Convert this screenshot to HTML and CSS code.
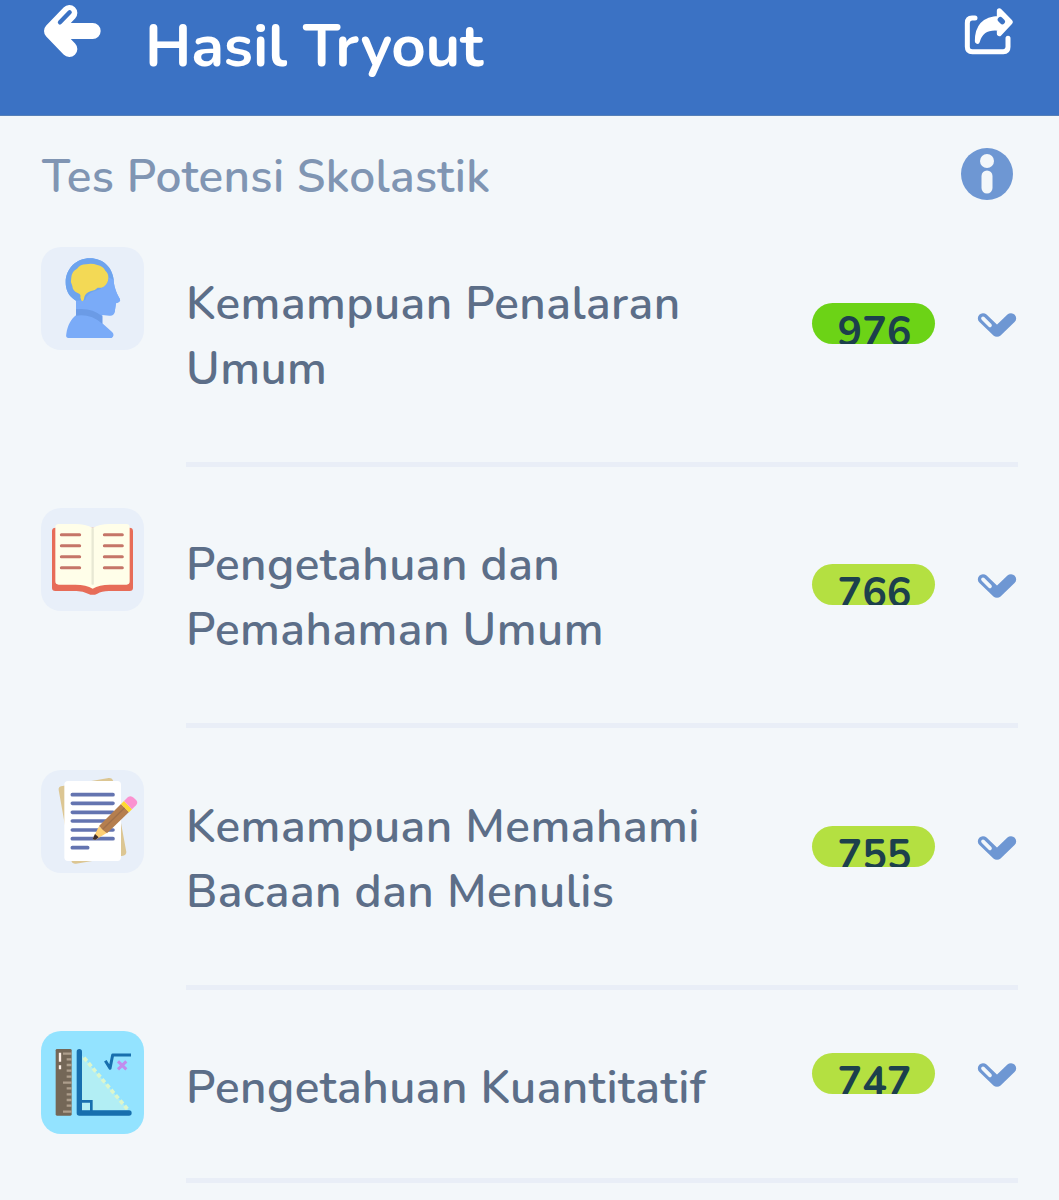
FILE: index.html
```html
<!DOCTYPE html>
<html lang="id">
<head>
    <meta charset="UTF-8">
    <meta name="viewport" content="width=device-width, initial-scale=1.0">
    <title>Hasil Tryout</title>
    <link rel="stylesheet" href="styles.css">
</head>
<body>
    <!-- shared chevron -->
    <svg class="defs" width="0" height="0">
        <symbol id="chevron" viewBox="528 62 126 84">
            <path d="M549 84 L591 124 L633 84" fill="none" stroke="#6e97d3" stroke-width="31" stroke-linecap="round" stroke-linejoin="round"/>
            <path d="M549 84 L570 105" stroke="#f3f7fa" stroke-width="11" stroke-linecap="round"/>
        </symbol>
    </svg>

    <header>
        <svg class="back" viewBox="126 9 180 168">
            <path d="M208 39 L156 93 L208 147 M160 93 H278" fill="none" stroke="#fff" stroke-width="48" stroke-linecap="round" stroke-linejoin="round"/>
            <path d="M209 37 L180 67" stroke="#3b72c4" stroke-width="13" stroke-linecap="round"/>
        </svg>
        <h1>Hasil Tryout</h1>
        <svg class="share" viewBox="66 18 156 150">
            <path d="M105 54 H96 Q82 54 82 69 V140 Q82 155 97 155 H190 Q204 155 204 141 V115" fill="none" stroke="#fff" stroke-width="15" stroke-linecap="round"/>
            <path d="M112 124 Q112 58 178 55 V32 L211 66 L178 101 V85 Q124 78 112 124 Z" fill="#fff" stroke="#fff" stroke-width="15" stroke-linejoin="round"/>
            <path d="M181 59 L187 65" stroke="#3b72c4" stroke-width="16" stroke-linecap="round"/>
        </svg>
    </header>

    <main>
        <div class="section">
            <h2>Tes Potensi Skolastik</h2>
            <svg class="info" viewBox="0 0 52 52">
                <circle cx="26" cy="26" r="26" fill="#6e97d3"/>
                <circle cx="26" cy="13" r="7" fill="#f3f7fa"/>
                <rect x="20.5" y="22.5" width="11" height="23" rx="5.5" fill="#f3f7fa"/>
            </svg>
        </div>

        <div class="row">
            <svg class="icon" viewBox="33 36 309 309">
                <path d="M138 197 C114 184 107 162 107 142 C107 101 139 70 180 70 C220 70 247 98 251 134 C252 154 257 169 270 193 Q273 201 258 205 L254 232 Q251 244 238 242 L217 240 V265 L247 292 Q255 302 245 309 H116 Q106 309 109 296 C113 270 123 253 138 241 Z" fill="#7aabf8"/>
                <path d="M138 197 C114 184 107 162 107 142 C107 101 139 70 180 70 C220 70 247 98 251 134 L238 140 L160 205 Z" fill="#6ea4ee"/>
                <path d="M138 197 L165 196 Q170 175 195 168 Q238 155 235 127 L251 134 C252 154 257 169 270 193 Q273 201 258 205 L254 232 L217 240 L138 225 Z" fill="#7aabf8"/>
                <path d="M138 223 Q184 217 217 244 V266 Q181 235 138 242 Z" fill="#6b9be6"/>
                <path d="M151 187 Q154 178 143 174 Q127 167 127 153 Q120 140 124 127 Q126 108 141 101 Q151 88 168 88 Q185 83 202 90 Q219 93 226 107 Q236 115 235 129 Q234 147 221 155 Q211 160 203 158 Q194 168 181 169 Q167 174 163 186 Q162 198 156 199 Q153 196 151 187 Z" fill="#f3d955"/>
            </svg>
            <div class="body">
                <p class="name">Kemampuan Penalaran<br>Umum</p>
                <div class="score high">976</div>
                <svg class="chevron"><use href="#chevron"/></svg>
            </div>
        </div>

        <div class="row">
            <svg class="icon" viewBox="33 39 309 309">
                <path d="M66 108 Q66 98 77 98 H298 Q309 98 309 108 V279 Q309 288 299 288 H242 Q216 287 202 296 Q188 303 174 296 Q158 287 135 288 H76 Q66 288 66 279 Z" fill="#e76c58"/>
                <path d="M76 95 Q77 87 86 87 H135 Q168 87 188 99 Q208 87 238 87 H289 Q299 87 299 96 V259 Q299 269 290 269 H239 Q208 269 188 281 Q169 269 136 269 H86 Q76 269 76 259 Z" fill="#fffee9"/>
                <path d="M188 102 V266" stroke="#e8e8d4" stroke-width="7" stroke-linecap="round"/>
                <path d="M94 119 H149 M94 152 H149 M94 185 H149 M94 218 H149 M223 119 H277 M223 152 H277 M223 185 H277 M223 218 H277" stroke="#c57568" stroke-width="9" stroke-linecap="round"/>
            </svg>
            <div class="body">
                <p class="name">Pengetahuan dan<br>Pemahaman Umum</p>
                <div class="score">766</div>
                <svg class="chevron"><use href="#chevron"/></svg>
            </div>
        </div>

        <div class="row">
            <svg class="icon" viewBox="33 45 309 309">
                <path d="M93 94 L236 69 Q247 68 250 79 L289 291 Q289 300 279 302 L138 326 Q127 328 124 318 L86 105 Q85 96 93 94 Z" fill="#dcc693"/>
                <rect x="103" y="78" width="170" height="240" rx="11" fill="#fff"/>
                <path d="M127 119 H249 M127 145 H249 M127 172 H249 M127 198 H249 M127 225 H249 M127 251 H249 M127 278 H173" stroke="#6474b0" stroke-width="11" stroke-linecap="round"/>
                <path d="M207 214 L189 250 Q190 256 197 254 L231 233 Z" fill="#ffcf73"/>
                <path d="M195 237 L189 250 Q190 256 197 254 L206 247 Z" fill="#3c2d2e"/>
                <path d="M207 213 L273 147 L297 171 L231 235 L220 226 Z" fill="#b57e4e"/>
                <path d="M218 223 L284 158" stroke="#a0704a" stroke-width="4"/>
                <path d="M273 147 L282 138 L306 163 L297 172 Z" fill="#ffd92f"/>
                <path d="M282 138 L294 126 Q303 120 311 128 L319 136 Q325 143 318 151 L306 163 Z" fill="#fb92d0"/>
            </svg>
            <div class="body">
                <p class="name">Kemampuan Memahami<br>Bacaan dan Menulis</p>
                <div class="score">755</div>
                <svg class="chevron"><use href="#chevron"/></svg>
            </div>
        </div>

        <div class="row single">
            <svg class="icon math" viewBox="33 46 309 309">
                <rect x="77" y="100" width="48" height="200" rx="4" fill="#746757"/>
                <path d="M99 114 H125 M110 131 H125 M110 148 H125 M110 165 H125 M110 183 H125 M99 201 H125 M110 218 H125 M110 236 H125 M110 253 H125 M110 270 H125 M99 288 H125" stroke="#ad9e8c" stroke-width="7"/>
                <path d="M90 111 V138 M90 149 V161" stroke="#fff1e8" stroke-width="7"/>
                <path d="M155 119 L296 284 H155 Z" fill="#b2eef4"/>
                <path d="M162 126 L292 280" stroke="#dcf6cc" stroke-width="11" stroke-dasharray="13 8"/>
                <path d="M155 257 H184 V287" fill="none" stroke="#176fae" stroke-width="8"/>
                <path d="M148 108 V292 H297" fill="none" stroke="#176fae" stroke-width="16" stroke-linecap="round" stroke-linejoin="round"/>
                <path d="M226 135 L240 158 L248 118 H303" fill="none" stroke="#176fae" stroke-width="9" stroke-linejoin="round"/>
                <path d="M264 137 L289 161 M289 137 L264 161" stroke="#c18ded" stroke-width="9"/>
            </svg>
            <div class="body">
                <p class="name">Pengetahuan Kuantitatif</p>
                <div class="score">747</div>
                <svg class="chevron"><use href="#chevron"/></svg>
            </div>
        </div>
    </main>
</body>
</html>
```
FILE: styles.css
```css
* {
    box-sizing: border-box;
}

body {
    font-family: "Nunito", "Lato", sans-serif;
    background-color: #f3f7fa;
    margin: 0;
    padding: 0;
    height: 1200px;
    overflow: hidden;
}

.defs {
    display: none;
}

header {
    display: flex;
    align-items: flex-start;
    height: 116px;
    padding: 3px 45px 0 42px;
    background-color: #3b72c4;
    border-bottom: 1px solid #5680b8;
}

.back {
    width: 60px;
    height: 56px;
}

h1 {
    flex: 1;
    margin: 8px 0 0 43px;
    font-size: 60px;
    line-height: 70px;
    font-weight: 700;
    letter-spacing: -0.2px;
    color: white;
}

.share {
    width: 52px;
    height: 50px;
    margin-top: 3px;
}

main {
    padding: 0 41px;
}

.section {
    display: flex;
    justify-content: space-between;
    height: 131px;
    padding: 32px 5px 0 0;
}

h2 {
    margin: 1px 0 0 1px;
    font-size: 46px;
    line-height: 56px;
    font-weight: 600;
    letter-spacing: 0.3px;
    color: #8095b3;
}

.info {
    width: 52px;
    height: 52px;
}

.row {
    display: flex;
    height: 220px;
    margin-bottom: 41.3px;
}

.icon {
    width: 103px;
    height: 103px;
    border-radius: 20px;
    background-color: #e8eff9;
}

.icon.math {
    background-color: #93e3ff;
}

.body {
    display: flex;
    flex: 1;
    margin-left: 42px;
    border-bottom: 5px solid #e9eef7;
}

.name {
    flex: 1;
    margin: 24px 0 0;
    font-size: 46px;
    line-height: 65px;
    font-weight: 600;
    letter-spacing: 0.45px;
    white-space: nowrap;
    color: #5c6e88;
}

.score {
    width: 123px;
    height: 41px;
    margin: 56px 41px 0 0;
    padding-left: 2px;
    border-radius: 21px;
    background-color: #b4e041;
    overflow: hidden;
    text-align: center;
    font-size: 41px;
    line-height: 60px;
    font-weight: 700;
    color: #1c404c;
}

.score.high {
    background-color: #6cd316;
}

.chevron {
    width: 42px;
    height: 28px;
    margin: 64px 0 0;
}

.single {
    height: 152px;
}

.single .score {
    margin-top: 22px;
}

.single .chevron {
    margin-top: 30px;
}
```
